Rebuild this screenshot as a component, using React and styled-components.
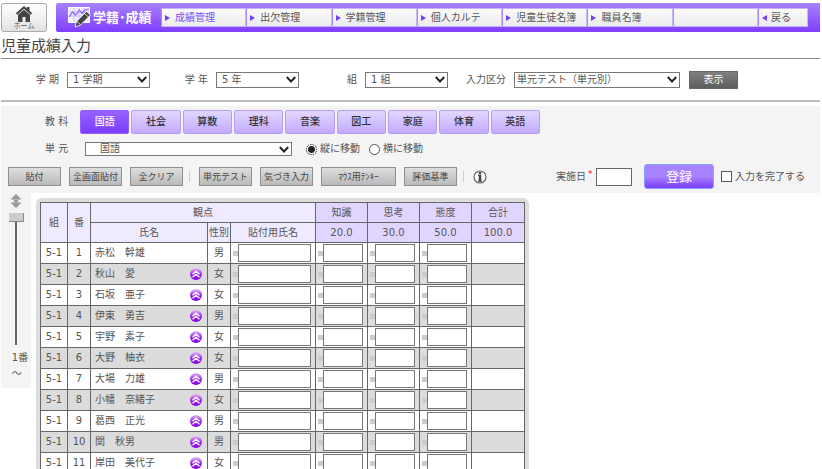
import React, { useState } from 'react';
import styled, { createGlobalStyle } from 'styled-components';

const navItems = ['成績管理', '出欠管理', '学籍管理', '個人カルテ', '児童生徒名簿', '職員名簿', ''];

const subjects = ['国語', '社会', '算数', '理科', '音楽', '図工', '家庭', '体育', '英語'];

const filters = [
  { id: 'term', label: '学 期', value: '1 学期' },
  { id: 'grade', label: '学 年', value: '5 年' },
  { id: 'class', label: '組', value: '1 組' },
  { id: 'kind', label: '入力区分', value: '単元テスト（単元別）', wide: true },
];

const points = [
  { name: '知識', max: '20.0' },
  { name: '思考', max: '30.0' },
  { name: '態度', max: '50.0' },
];

const students = [
  { name: '赤松　幹雄', sex: '男' },
  { name: '秋山　愛', sex: '女', moved: true },
  { name: '石坂　亜子', sex: '女', moved: true },
  { name: '伊東　勇吉', sex: '男', moved: true },
  { name: '宇野　素子', sex: '女', moved: true },
  { name: '大野　柚衣', sex: '女', moved: true },
  { name: '大場　力雄', sex: '男', moved: true },
  { name: '小幡　奈緒子', sex: '女', moved: true },
  { name: '葛西　正光', sex: '男', moved: true },
  { name: '関　秋男', sex: '男', moved: true },
  { name: '岸田　美代子', sex: '女', moved: true },
];

const HomeIcon = () => (
  <svg width="18" height="16" viewBox="0 0 18 16" fill="#444" aria-hidden="true">
    <path d="M9 0 .8 7.200l1.400 1.600L9 2.800l6.800 6 1.400-1.600L14.500 4.800V1h-2.500v1.600z" />
    <path d="M3 8.800 9 3.700l6 5.100V16h-4.500v-5h-3v5H3z" />
  </svg>
);

const LogoIcon = () => (
  <svg width="24" height="21" viewBox="0 0 24 21" fill="none" aria-hidden="true">
    <path d="M.5.5h21v15H.5z" fill="#f3eeff" stroke="#fff" />
    <path d="M1 5h20M1 9h20M6 1v14M11 1v14M16 1v14" stroke="#cdbaff" />
    <path d="m1 10 3.500-5 3 3 4-5 2.500 3.500L17 3l4-1" stroke="#8d5cf6" strokeWidth="1.200" />
    <path d="m7 20 1.500-5.500L18.500 4.500l4 3.500-10 10z" fill="#444" stroke="#fff" strokeWidth=".8" />
    <path d="m9 14.500 3.300 3M16.500 6.500l4 3.500" stroke="#fff" strokeWidth=".8" />
  </svg>
);

const Chevron = () => (
  <svg width="10" height="7" viewBox="0 0 10 7" fill="none" stroke="#222" strokeWidth="1.900" aria-hidden="true">
    <path d="m.8 1 4.200 4.500L9.200 1" />
  </svg>
);

const InfoIcon = () => (
  <svg width="14" height="14" viewBox="0 0 14 14" fill="none" aria-hidden="true">
    <circle cx="7" cy="7" r="6" fill="#fff" stroke="#666" strokeWidth="1.200" />
    <path d="M7 2v2.500M7 5v6" stroke="#444" strokeWidth="2.600" />
    <path d="M5 5.500h2M5 11.300h4" stroke="#444" />
  </svg>
);

const ScrollIcon = () => (
  <svg width="12" height="14" viewBox="0 0 12 14" fill="#999" aria-hidden="true">
    <path d="M6 0 .5 5.500H4v3H.5L6 14l5.500-5.500H8v-3h3.500z" />
    <path d="M2 5.500h8M2 8.500h8" stroke="#bbb" />
  </svg>
);

const UpIcon = () => (
  <svg width="12" height="12" viewBox="0 0 12 12" fill="none" aria-hidden="true">
    <defs>
      <linearGradient id="upFill" x1="0" y1="0" x2="0" y2="1">
        <stop offset="0" stopColor="#e2b8fa" />
        <stop offset=".5" stopColor="#a52af0" />
        <stop offset="1" stopColor="#8500e6" />
      </linearGradient>
    </defs>
    <circle cx="6" cy="6" r="6" fill="url(#upFill)" />
    <path d="m2.500 6.200 3.500-3 3.500 3M2.500 9.300l3.500-3 3.500 3" stroke="#fff" strokeWidth="1.300" />
  </svg>
);

const SelectBox = ({ id, value, width, inset }) => (
  <SelectFrame $width={width}>
    <Select id={id} $inset={inset} defaultValue={value}>
      <option>{value}</option>
    </Select>
    <Chevron />
  </SelectFrame>
);

const App = () => {
  const [subject, setSubject] = useState('国語');
  const [direction, setDirection] = useState('vertical');

  return (
    <Page>
      <GlobalStyle />
      <Header>
        <HomeButton type="button">
          <HomeIcon />
          ホーム
        </HomeButton>
        <NavBar>
          <Brand>
            <LogoIcon />
            学籍･成績
          </Brand>
          <NavList>
            {navItems.map((item, index) => (
              item
                ? <NavLink key={index} href="#" $active={index === 0}><Arrow />{item}</NavLink>
                : <NavBlank key={index} />
            ))}
            <BackLink href="#"><Arrow $left />戻る</BackLink>
          </NavList>
        </NavBar>
      </Header>

      <Title>児童成績入力</Title>

      <FilterBar>
        {filters.map(({ id, label, value, wide }) => (
          <Field key={id}>
            <FieldLabel htmlFor={id}>{label}</FieldLabel>
            <SelectBox id={id} value={value} width={wide ? 166 : 83} inset={wide ? 2 : 5} />
          </Field>
        ))}
        <ShowButton type="button">表示</ShowButton>
      </FilterBar>

      <Panel>
        <PanelRow>
          <PanelLabel>教 科</PanelLabel>
          <Tabs>
            {subjects.map((name) => (
              <Tab key={name} type="button" $active={name === subject} onClick={() => setSubject(name)}>
                {name}
              </Tab>
            ))}
          </Tabs>
        </PanelRow>

        <UnitRow>
          <PanelLabel as="label" htmlFor="unit">単 元</PanelLabel>
          <SelectBox id="unit" value="国語" width={207} inset={14} />
          <RadioGroup>
            <OptionLabel>
              <Radio
                name="direction"
                checked={direction === 'vertical'}
                onChange={() => setDirection('vertical')}
              />
              縦に移動
            </OptionLabel>
            <OptionLabel>
              <Radio
                name="direction"
                checked={direction === 'horizontal'}
                onChange={() => setDirection('horizontal')}
              />
              横に移動
            </OptionLabel>
          </RadioGroup>
        </UnitRow>

        <ToolRow>
          <ToolGroup>
            <ToolButton type="button">貼付</ToolButton>
            <ToolButton type="button">全画面貼付</ToolButton>
            <ToolButton type="button">全クリア</ToolButton>
          </ToolGroup>
          <Divider />
          <ToolGroup>
            <ToolButton type="button">単元テスト</ToolButton>
            <ToolButton type="button">気づき入力</ToolButton>
            <ToolButton type="button" $wide>ﾏｳｽ用ﾃﾝｷｰ</ToolButton>
            <ToolButton type="button">評価基準</ToolButton>
          </ToolGroup>
          <Divider />
          <InfoButton type="button" aria-label="説明"><InfoIcon /></InfoButton>
          <SaveGroup>
            <DateLabel htmlFor="date">実施日<Required>*</Required></DateLabel>
            <DateInput id="date" />
            <SaveButton type="button">登録</SaveButton>
            <OptionLabel>
              <Checkbox />
              入力を完了する
            </OptionLabel>
          </SaveGroup>
        </ToolRow>
      </Panel>

      <Content>
        <Side>
          <ScrollIcon />
          <Slider aria-label="表示開始番号" min="1" max="30" defaultValue="1" />
          <SideText htmlFor="start">1番<br />～</SideText>
        </Side>

        <TableFrame>
          <Table>
            <colgroup>
              <Col $width={27} />
              <Col $width={23} />
              <Col $width={117} />
              <Col $width={23} />
              <Col $width={85} />
              {points.map(({ name }) => <Col key={name} $width={52} />)}
              <Col $width={53} />
            </colgroup>
            <thead>
              <tr>
                <Th rowSpan={2}>組</Th>
                <Th rowSpan={2}>番</Th>
                <Th colSpan={3}>観点</Th>
                {points.map(({ name }) => <Th key={name} $deep>{name}</Th>)}
                <Th $deep>合計</Th>
              </tr>
              <tr>
                <Th>氏名</Th>
                <Th>性別</Th>
                <Th>貼付用氏名</Th>
                {points.map(({ name, max }) => <Th key={name} $deep>{max}</Th>)}
                <Th $deep>100.0</Th>
              </tr>
            </thead>
            <tbody>
              {students.map(({ name, sex, moved }, index) => (
                <Row key={name}>
                  <Td>5-1</Td>
                  <Td>{index + 1}</Td>
                  <Td>
                    <NameCell>
                      {name}
                      {moved && <UpIcon />}
                    </NameCell>
                  </Td>
                  <Td>{sex}</Td>
                  <Td>
                    <Entry><Marker /><CellInput aria-label={`${name} 貼付用氏名`} /></Entry>
                  </Td>
                  {points.map((point) => (
                    <Td key={point.name}>
                      <Entry><Marker /><CellInput aria-label={`${name} ${point.name}`} /></Entry>
                    </Td>
                  ))}
                  <Td />
                </Row>
              ))}
            </tbody>
          </Table>
        </TableFrame>
      </Content>
    </Page>
  );
};

export default App;

//
// Styled Components
//

const GlobalStyle = createGlobalStyle`
  * {
    box-sizing: border-box;
  }

  html {
    scrollbar-width: none;
  }

  body {
    margin: 0;
    background: #fff;
    color: #555;
    font: 10px/14px "DejaVu Sans", "Noto Sans CJK JP", sans-serif;
  }

  button, input, select {
    margin: 0;
    padding: 0;
    color: inherit;
    font: inherit;
  }

  svg {
    display: block;
    flex: none;
  }
`;

const Page = styled.div`
  padding: 3px 2px 0 1px;
  white-space: nowrap;
`;

const Header = styled.header`
  display: flex;
  gap: 9px;
`;

const HomeButton = styled.button`
  display: flex;
  flex-direction: column;
  align-items: center;
  justify-content: center;
  gap: 1px;
  width: 46px;
  height: 29px;
  border: 1px solid #aaa;
  border-radius: 3px;
  background: linear-gradient(#fff, #e2e2e2);
  font-size: 7px;
  line-height: 7px;
`;

const NavBar = styled.nav`
  display: flex;
  flex: 1;
  align-items: center;
  height: 29px;
  padding-right: 12px;
  border-radius: 2px 0 0 2px;
  background: linear-gradient(#a783ff, #7f3dfd);
`;

const Brand = styled.div`
  display: flex;
  align-items: center;
  gap: 1px;
  width: 105px;
  padding-left: 12px;
  color: #fff;
  font-size: 13px;
  font-weight: 700;
`;

const NavList = styled.div`
  display: grid;
  flex: 1;
  grid-template-columns: repeat(7, 1fr) 50px;
  height: 19px;
`;

const NavBlank = styled.span`
  border: 1px solid #c9b3ff;
  border-left-color: #a98aff;
  background: linear-gradient(#fbfbfb, #ebebeb);
`;

const NavLink = styled.a`
  display: flex;
  align-items: center;
  gap: 5px;
  padding-left: 3px;
  border: 1px solid #c9b3ff;
  border-left-color: #a98aff;
  background: linear-gradient(#fbfbfb, #ebebeb);
  color: ${({ $active }) => ($active ? '#7c4dff' : '#555')};
  text-decoration: none;
`;

const BackLink = styled(NavLink)`
  gap: 4px;
`;

const Arrow = styled.span`
  border: solid transparent;
  border-width: 3px 0;
  border-${({ $left }) => ($left ? 'right' : 'left')}: 5px solid #7440f5;
`;

const Title = styled.h1`
  margin: 0;
  padding-top: 3px;
  border-bottom: 1px solid #888;
  color: #444;
  font-size: 15px;
  font-weight: 400;
  line-height: 23px;
`;

const FilterBar = styled.div`
  display: flex;
  align-items: center;
  gap: 16px;
  height: 43px;
  padding-left: 16px;
  border-bottom: 2px solid #bbb;
`;

const Field = styled.div`
  display: flex;
  align-items: center;
  gap: 8px;
`;

const FieldLabel = styled.label`
  width: 42px;
  text-align: right;
`;

const SelectFrame = styled.div`
  display: grid;
  width: ${({ $width }) => $width}px;
  align-items: center;

  > * {
    grid-area: 1 / 1;
  }

  svg {
    margin-right: 3px;
    justify-self: end;
    pointer-events: none;
  }
`;

const Select = styled.select`
  width: 100%;
  height: 16px;
  padding-left: ${({ $inset }) => $inset}px;
  border: 1px solid #777;
  border-radius: 0;
  background: #fff;
  line-height: 14px;
  appearance: none;
`;

const ShowButton = styled.button`
  width: 49px;
  height: 18px;
  margin-left: -7px;
  border: 1px solid #666;
  background: linear-gradient(#808080, #5d5d5d);
  color: #fff;
`;

const Panel = styled.section`
  display: flex;
  flex-direction: column;
  gap: 8px;
  margin-top: 4px;
  padding: 4px 0;
  background: #f4f4f4;
`;

const PanelRow = styled.div`
  display: flex;
  align-items: center;
`;

const UnitRow = styled(PanelRow)`
  height: 14px;
  line-height: 14px;

  select {
    height: 14px;
    line-height: 12px;
  }

  ${SelectFrame} {
    margin-left: 5px;
  }
`;

const PanelLabel = styled.span`
  width: 79px;
  padding-left: 44px;
`;

const Tabs = styled.div`
  display: grid;
  grid-template-columns: repeat(9, 1fr);
  gap: 2px;
  width: 460px;
`;

const Tab = styled.button`
  height: 24px;
  border: 1px solid ${({ $active }) => ($active ? '#915fff' : '#b79df5')};
  border-radius: 2px;
  background: ${({ $active }) => ($active
    ? 'linear-gradient(#9563ff, #7c3cfc)'
    : 'linear-gradient(#e2d7ff, #c2aaff)')};
  color: ${({ $active }) => ($active ? '#fff' : '#333')};
  font-weight: 500;
`;

const RadioGroup = styled.div`
  display: flex;
  gap: 9px;
  margin-left: 14px;
`;

const OptionLabel = styled.label`
  display: flex;
  align-items: center;
  gap: 3px;
`;

const Radio = styled.input.attrs({ type: 'radio' })`
  width: 11px;
  height: 11px;
  border: 1px solid #555;
  border-radius: 50%;
  background: #fff;
  appearance: none;

  &:checked {
    border-style: dotted;
    background: radial-gradient(#222 0 3px, #fff 4px);
    outline: 1px dotted #555;
    outline-offset: -1px;
  }
`;

const ToolRow = styled(PanelRow)`
  height: 25px;
  padding: 0 15px 0 7px;
`;

const ToolGroup = styled.div`
  display: flex;
  gap: 8px;
`;

const ToolButton = styled.button`
  width: ${({ $wide }) => ($wide ? 75 : 53)}px;
  height: 19px;
  border: 1px solid #909090;
  background: linear-gradient(#dedede, #bababa);
  color: #444;
  font-size: 9px;
`;

const Divider = styled.span`
  width: 1px;
  height: 11px;
  margin: 0 9px 0 6px;
  background: #ccc;
`;

const InfoButton = styled.button`
  border: 0;
  background: none;
`;

const SaveGroup = styled.div`
  display: flex;
  align-items: center;
  margin-left: auto;
`;

const DateLabel = styled.label`
  display: flex;
  width: 40px;
  gap: 2px;
`;

const Required = styled.span`
  color: #f00;
  font-size: 9px;
  line-height: 8px;
`;

const DateInput = styled.input`
  width: 36px;
  height: 18px;
  margin-right: 12px;
  border: 1px solid #666;
  background: #fff;
`;

const SaveButton = styled.button`
  width: 70px;
  height: 25px;
  margin-right: 7px;
  border: 1px solid #85a0ff;
  border-radius: 3px;
  background: linear-gradient(#a783ff 50%, #7c3cfc);
  color: #fff;
  font-size: 13px;
`;

const Checkbox = styled.input.attrs({ type: 'checkbox' })`
  width: 11px;
  height: 11px;
  border: 1px solid #555;
  background: #fff;
  appearance: none;

  &:checked {
    background: #555;
  }
`;

const Content = styled.main`
  display: flex;
  align-items: flex-start;
  gap: 5px;
`;

const Side = styled.aside`
  display: flex;
  flex-direction: column;
  align-items: center;
  width: 30px;
  height: 195px;
  padding-top: 1px;
  background: #f4f4f4;
`;

const Slider = styled.input.attrs({ type: 'range', id: 'start' })`
  width: 15px;
  height: 132px;
  margin: 5px 0;
  background: linear-gradient(#666, #666) center / 2px 100% no-repeat;
  writing-mode: vertical-lr;
  appearance: none;

  &::-webkit-slider-thumb {
    width: 15px;
    height: 9px;
    border: solid #888;
    border-width: 0 1px 1px 0;
    background: #ccc;
    appearance: none;
  }
`;

const SideText = styled.label`
  padding-left: 8px;
  line-height: 16px;
`;

const TableFrame = styled.div`
  margin-top: 5px;
  padding: 4px;
  border-radius: 6px;
  background: #ddd;
`;

const Table = styled.table`
  width: 485px;
  border-collapse: collapse;
  table-layout: fixed;
`;

const Col = styled.col`
  width: ${({ $width }) => $width}px;
`;

const Th = styled.th`
  height: 20px;
  padding: 0;
  border: 1px solid #666;
  background: ${({ $deep }) => ($deep ? '#e0d5ff' : '#efeaff')};
  font-weight: 400;
`;

const Row = styled.tr`
  background: #fff;

  &:nth-child(even) {
    background: #dcdcdc;
  }
`;

const Td = styled.td`
  height: 21px;
  padding: 0;
  border: 1px solid #666;
  text-align: center;
`;

const NameCell = styled.div`
  display: flex;
  align-items: center;
  justify-content: space-between;
  padding: 0 5px 0 4px;
`;

const Entry = styled.div`
  display: flex;
  align-items: center;
  padding: 0 4px 0 2px;
`;

const Marker = styled.span`
  flex: none;
  width: 5px;
  height: 5px;
  background: #ccc;
`;

const CellInput = styled.input`
  flex: 1;
  min-width: 0;
  height: 18px;
  border: 1px solid #777;
  background: #fff;
`;
